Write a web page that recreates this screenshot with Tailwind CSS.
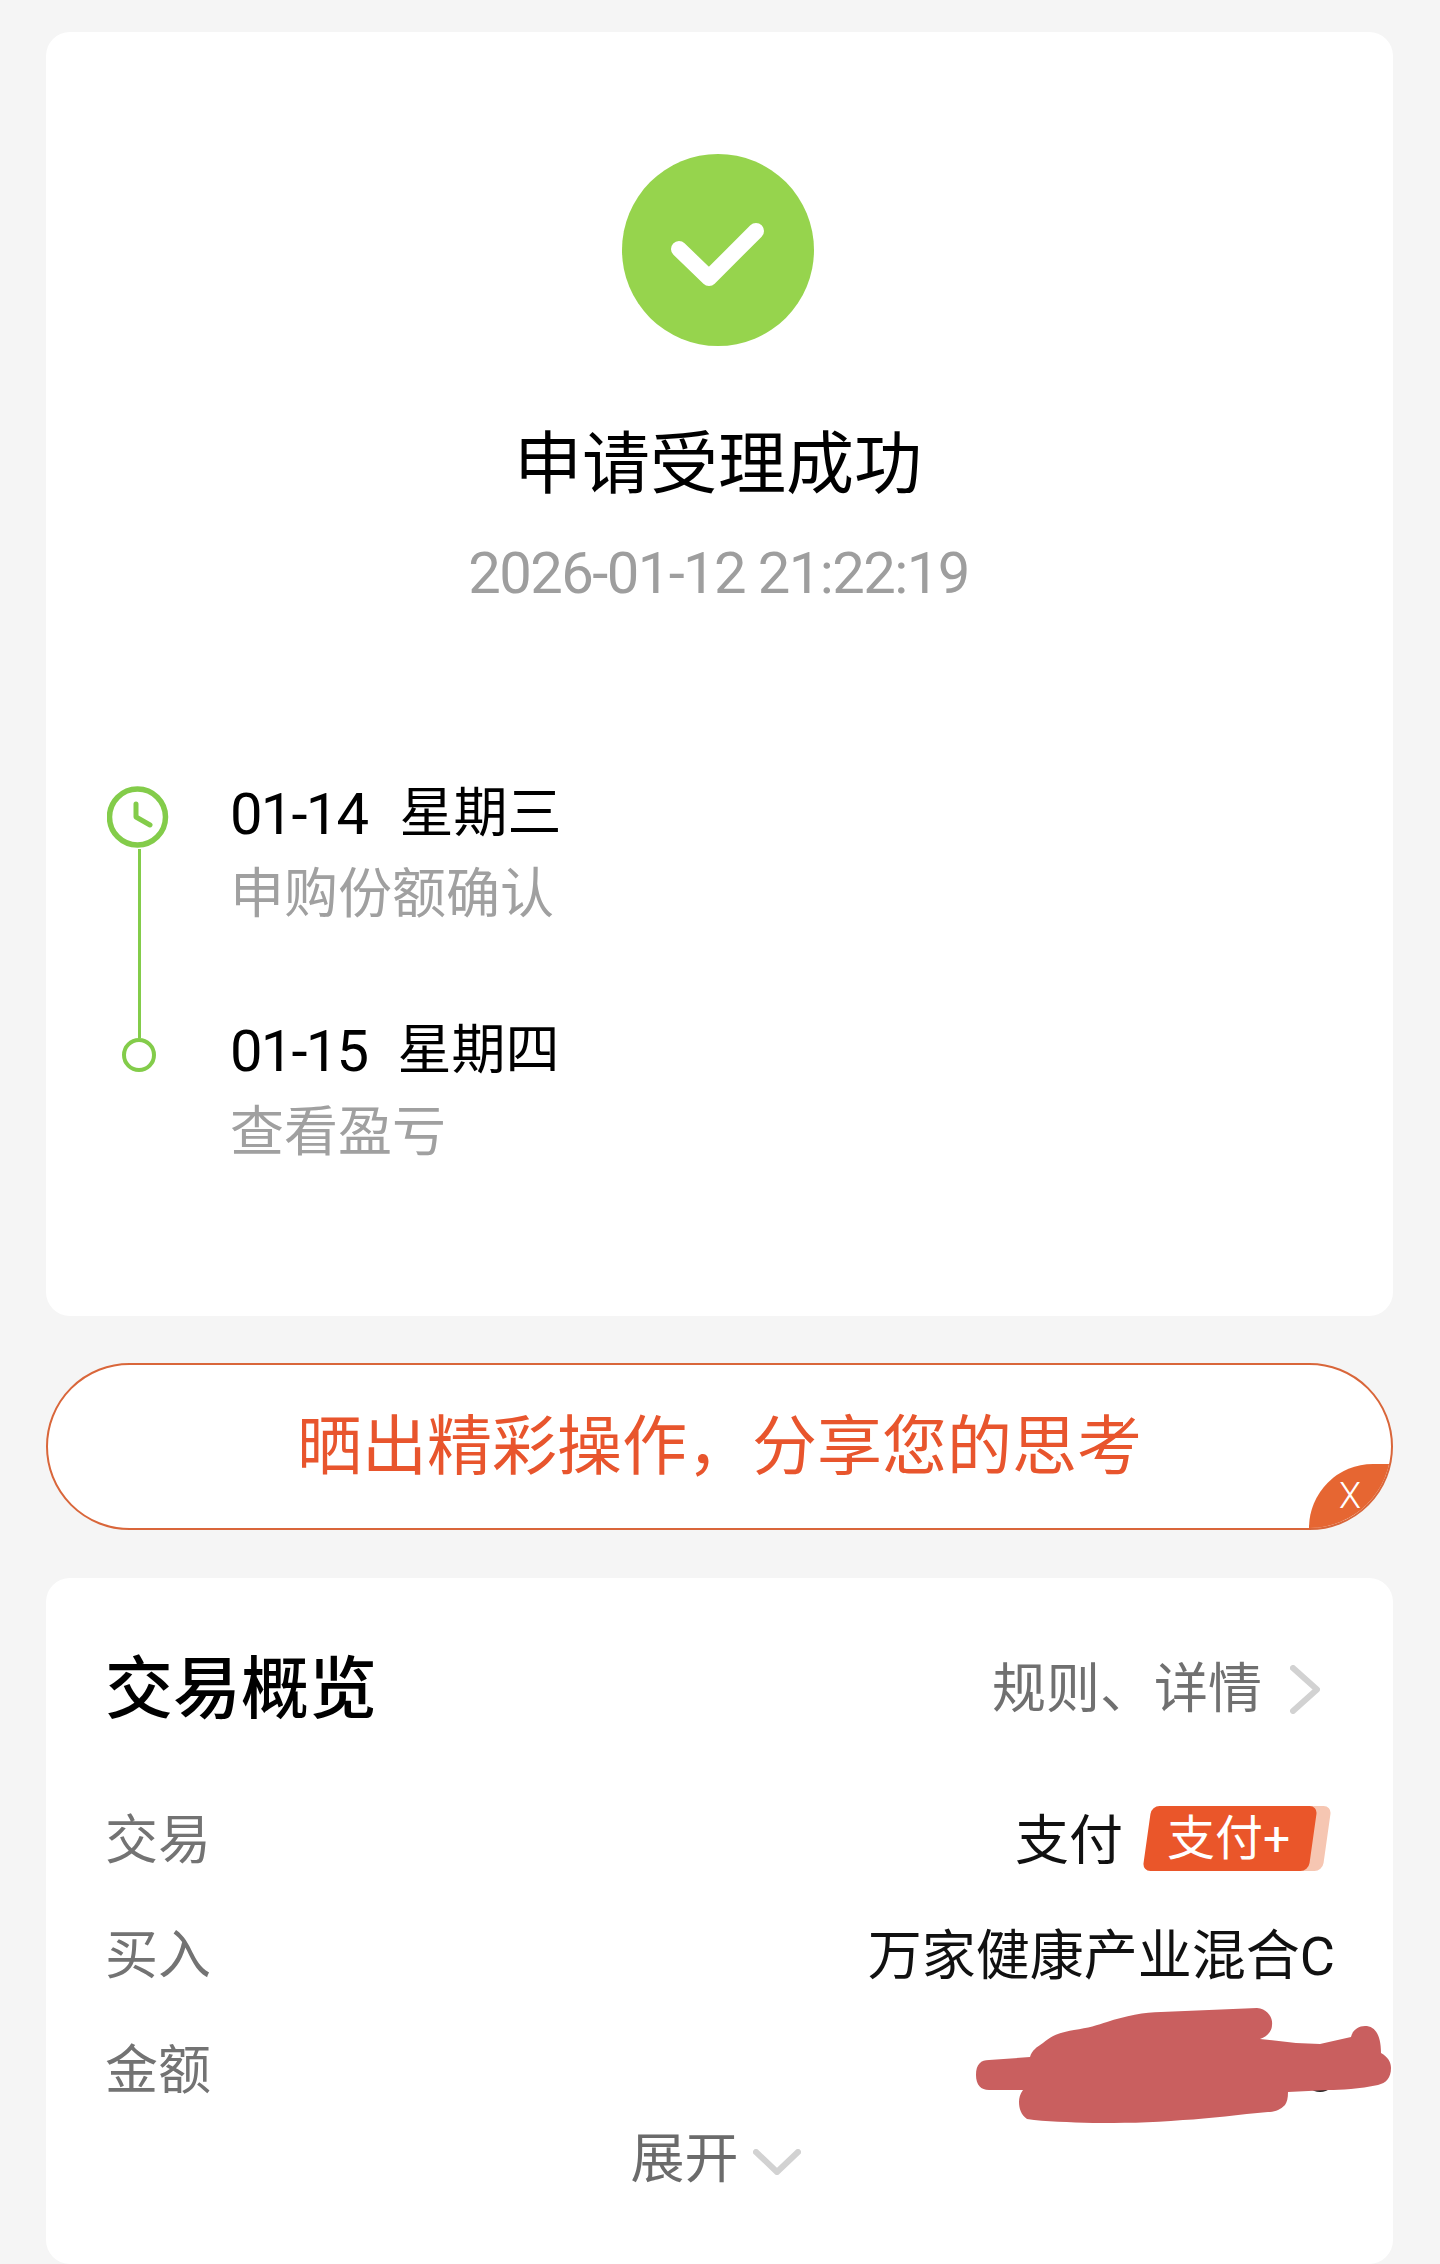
<!DOCTYPE html>
<html lang="zh-CN">
<head>
  <meta charset="UTF-8" />
  <meta name="viewport" content="width=device-width, initial-scale=1.0" />
  <title>申请受理成功</title>
  <script src="https://cdn.jsdelivr.net/npm/@tailwindcss/browser@4"></script>
</head>
<body class="bg-[#f5f5f5] font-['Roboto','Noto_Sans_CJK_SC',sans-serif]">
  <div class="relative w-[1440px] h-[2264px] overflow-hidden pl-[46px] pr-[47px] pt-[32px] flex flex-col">

    <!-- result card -->
    <div class="bg-white rounded-[24px] h-[1284px] pt-[122px] flex flex-col">
      <div class="w-[192px] h-[192px] ml-[576px] rounded-full bg-[#96d44d] flex items-center justify-center">
        <svg width="192" height="192" viewBox="0 0 192 192" fill="none">
          <path d="M57 95L87 124L134 77" stroke="#fff" stroke-width="16" stroke-linecap="round" stroke-linejoin="round" />
        </svg>
      </div>
      <h1 class="mt-[79px] pr-[3px] text-center text-[68px] leading-[80px] text-black">申请受理成功</h1>
      <p class="mt-[33px] pr-[2px] text-center text-[58px] leading-[70px] tracking-[-1.6px] text-[#9e9e9e]">2026-01-12 21:22:19</p>

      <div class="mt-[171px] pl-[61px] flex">
        <div class="w-[64px] pt-[7px] flex flex-col items-center">
          <svg width="64" height="63" viewBox="0 0 64 63" fill="none" class="block">
            <circle cx="30.5" cy="31" r="28" stroke="#83cc4a" stroke-width="5.5" />
            <path d="M29 18V31L43 39" stroke="#83cc4a" stroke-width="5" stroke-linecap="round" stroke-linejoin="round" />
          </svg>
          <div class="w-[3px] h-[189px] bg-[#83cc4a]"></div>
          <div class="w-[34px] h-[34px] rounded-full border-[4px] border-[#83cc4a]"></div>
        </div>
        <div class="ml-[59px] flex flex-col">
          <p class="text-[54px] leading-[70px] text-black flex"><span class="text-[58px] tracking-[-1.8px]">01-14</span><span class="ml-[32px]">星期三</span></p>
          <p class="mt-[11px] text-[54px] leading-[70px] text-[#a0a0a0]">申购份额确认</p>
          <p class="mt-[86px] text-[54px] leading-[70px] text-black flex"><span class="text-[58px] tracking-[-1.8px]">01-15</span><span class="ml-[30px]">星期四</span></p>
          <p class="mt-[12px] text-[54px] leading-[70px] text-[#a0a0a0]">查看盈亏</p>
        </div>
      </div>
    </div>

    <!-- share banner -->
    <div class="relative mt-[47px] h-[167px] w-[1347px] rounded-full border-[2px] border-[#d9663a] bg-white overflow-hidden flex items-center justify-center">
      <span class="text-[65px] leading-[80px] text-[#e8552d]">晒出精彩操作，分享您的思考</span>
      <div class="absolute right-0 bottom-0 w-[82px] h-[64px] bg-[#e66632] rounded-tl-[64px] flex items-center justify-center">
        <span class="text-[36px] leading-none font-light text-white">X</span>
      </div>
    </div>

    <!-- overview card -->
    <div class="mt-[48px] bg-white rounded-[24px] h-[686px] pt-[72px] pl-[59px] pr-[58px] flex flex-col">
      <div class="flex items-center justify-between h-[80px]">
        <h2 class="text-[68px] leading-[80px] font-medium text-black">交易概览</h2>
        <div class="flex items-center mr-[15px]">
          <span class="text-[54px] leading-[70px] text-[#707070]">规则、详情</span>
          <svg width="30" height="49" viewBox="0 0 30 49" fill="none" class="ml-[28px] -mt-[2px]">
            <path d="M3 3L27 24.5L3 46" stroke="#d2d2d2" stroke-width="6" stroke-linecap="round" stroke-linejoin="round" />
          </svg>
        </div>
      </div>

      <div class="mt-[54px] flex flex-col">
        <div class="h-[115px] flex items-center justify-between">
          <span class="text-[53px] text-[#737373]">交易</span>
          <div class="flex items-center">
            <span class="text-[54px] text-[#111]">支付</span>
            <div class="relative ml-[24px] mr-[22px] w-[166px] h-[65px] -mt-[6px]">
              <div class="absolute -right-[14px] top-0 w-[60px] h-[65px] rounded-[8px] skew-x-[-8deg] bg-[#f6c6b2]"></div>
              <div class="absolute inset-0 rounded-[8px] skew-x-[-8deg] bg-[#ea562a]"></div>
              <span class="absolute inset-0 pr-[3px] flex items-center justify-center text-[48px] leading-none text-white">支付+</span>
            </div>
          </div>
        </div>
        <div class="h-[115px] flex items-center justify-between">
          <span class="text-[53px] text-[#737373]">买入</span>
          <span class="text-[54px] text-[#111]">万家健康产业混合C</span>
        </div>
        <div class="h-[115px] flex items-center justify-between">
          <span class="text-[53px] text-[#737373]">金额</span>
        </div>
      </div>

      <div class="-mt-[4px] pr-[9px] flex items-center justify-center">
        <span class="text-[54px] leading-[70px] text-[#6b6b6b]">展开</span>
        <svg width="48" height="26" viewBox="0 0 48 26" fill="none" class="ml-[14px] mt-[4px]">
          <path d="M3 3L24 23L45 3" stroke="#d2d2d2" stroke-width="6" stroke-linecap="round" stroke-linejoin="round" />
        </svg>
      </div>
    </div>

    <!-- red scribble painted over the amount -->
    <svg class="absolute left-0 top-0 pointer-events-none" width="1440" height="2264" viewBox="0 0 1440 2264" fill="none">
      <ellipse cx="1320" cy="2089" rx="8" ry="3" fill="#222" />
      <path fill="#c95f5f" d="M976 2075C976 2064 981 2060 989 2060L1030 2057C1032 2050 1037 2047 1043 2043C1052 2035 1062 2032 1074 2030C1088 2028 1098 2025 1107 2022C1125 2016 1145 2012 1161 2012L1257 2008C1268 2009 1273 2018 1272 2025C1272 2031 1267 2037 1260 2039L1296 2043L1320 2044L1351 2037C1352 2031 1358 2026 1365 2026C1375 2026 1381 2035 1381 2053C1388 2057 1391 2062 1391 2068C1391 2078 1386 2083 1378 2085C1360 2089 1340 2090 1329 2090L1288 2092C1288 2098 1287 2102 1285 2105C1280 2110 1275 2112 1268 2112C1240 2114 1210 2119 1183 2120C1150 2123 1120 2123 1093 2123C1070 2122 1045 2122 1027 2119C1021 2115 1019 2108 1019 2102C1019 2098 1020 2094 1023 2090L989 2090C981 2090 976 2085 976 2075Z" />
    </svg>
  </div>
</body>
</html>
